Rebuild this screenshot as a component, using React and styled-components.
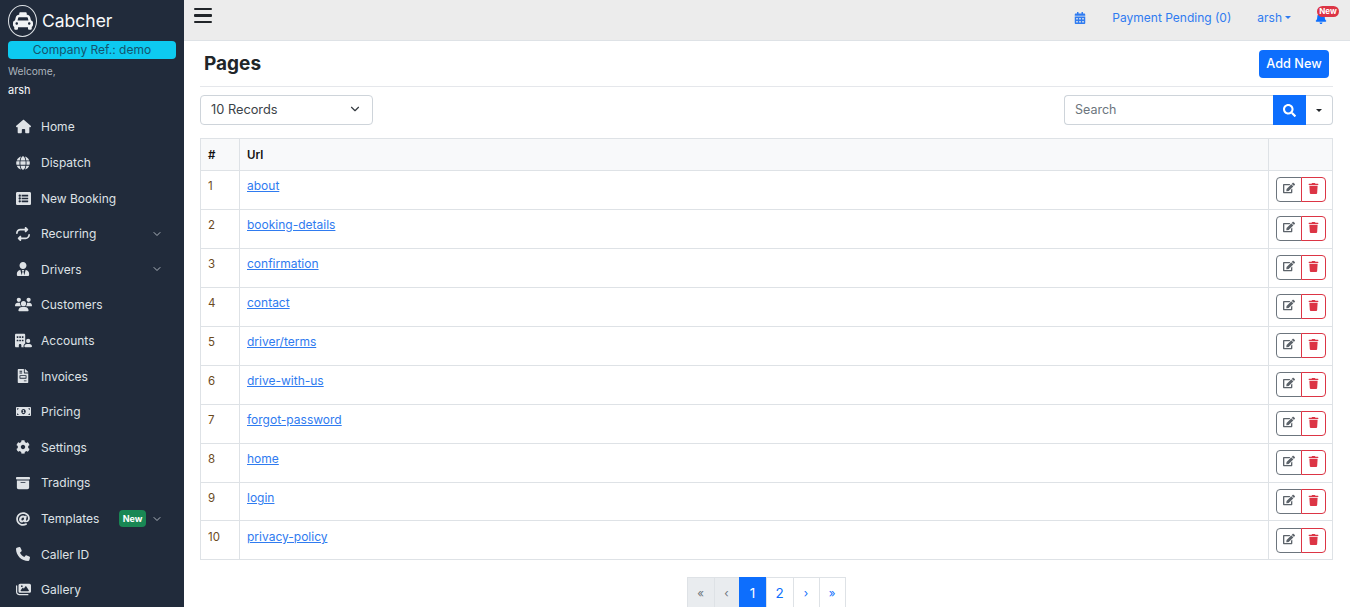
import React from 'react';
import styled, { createGlobalStyle } from 'styled-components';
import {
  FaGlobe, FaListAlt, FaUserTie, FaFileInvoice, FaMoneyBillAlt,
  FaCog, FaAt, FaCalendarAlt, FaBell, FaEdit, FaTrash, FaSearch, FaTaxi,
} from 'react-icons/fa';
import { FaBuildingUser, FaPhone, FaImages, FaBoxArchive, FaRepeat, FaHouse, FaUsers } from 'react-icons/fa6';
import { ChevronDown } from 'lucide-react';

const GlobalStyle = createGlobalStyle`
  * { box-sizing: border-box; }
  html, body { margin: 0; height: 100%; overflow: hidden; }
  body { font-family: Inter, "Liberation Sans", sans-serif; font-size: 12px; color: #212529; background: #fff; }
`;

const menu = [
  { label: 'Home', icon: FaHouse, size: 15 },
  { label: 'Dispatch', icon: FaGlobe, size: 14 },
  { label: 'New Booking', icon: FaListAlt, size: 15 },
  { label: 'Recurring', icon: FaRepeat, size: 14, caret: true },
  { label: 'Drivers', icon: FaUserTie, size: 14, caret: true },
  { label: 'Customers', icon: FaUsers, size: 17 },
  { label: 'Accounts', icon: FaBuildingUser, size: 17 },
  { label: 'Invoices', icon: FaFileInvoice, size: 14 },
  { label: 'Pricing', icon: FaMoneyBillAlt, size: 15 },
  { label: 'Settings', icon: FaCog, size: 14 },
  { label: 'Tradings', icon: FaBoxArchive, size: 14 },
  { label: 'Templates', icon: FaAt, size: 14, caret: true, badge: 'New' },
  { label: 'Caller ID', icon: FaPhone, size: 14 },
  { label: 'Gallery', icon: FaImages, size: 15 },
];

const pages = [
  'about', 'booking-details', 'confirmation', 'contact', 'driver/terms',
  'drive-with-us', 'forgot-password', 'home', 'login', 'privacy-policy',
];

const pager = [
  { label: '«', disabled: true, arrow: true, width: 28 },
  { label: '‹', disabled: true, arrow: true, width: 26 },
  { label: '1', active: true, width: 28 },
  { label: '2', width: 28 },
  { label: '›', arrow: true, width: 27 },
  { label: '»', arrow: true, width: 27 },
];

const App = () => {
  return (
    <Layout>
      <GlobalStyle />
      <Sidebar>
        <Brand>
          <BrandLogo><FaTaxi size={20} /></BrandLogo>
          <BrandName>Cabcher</BrandName>
        </Brand>
        <CompanyRef>Company Ref.: demo</CompanyRef>
        <Welcome>Welcome,</Welcome>
        <UserName>arsh</UserName>
        <Menu>
          {menu.map(item => (
            <MenuItem key={item.label}>
              <MenuIcon><item.icon size={item.size} /></MenuIcon>
              <MenuLabel>{item.label}</MenuLabel>
              {item.badge && <NewBadge>{item.badge}</NewBadge>}
              {item.caret && <MenuCaret><ChevronDown size={12} /></MenuCaret>}
            </MenuItem>
          ))}
        </Menu>
      </Sidebar>
      <Main>
        <Topbar>
          <Burger aria-label="Toggle menu">
            <span /><span /><span />
          </Burger>
          <TopLinks>
            <TopLink><FaCalendarAlt size={12} /></TopLink>
            <TopLink>Payment Pending (0)</TopLink>
            <TopLink>arsh<SmallCaret /></TopLink>
            <BellLink>
              <FaBell size={12} />
              <BellBadge>New</BellBadge>
            </BellLink>
          </TopLinks>
        </Topbar>
        <Content>
          <PageHeader>
            <Title>Pages</Title>
            <AddButton>Add New</AddButton>
          </PageHeader>
          <Filters>
            <RecordsSelect>
              10 Records
              <ChevronDown size={14} color="#343a40" />
            </RecordsSelect>
            <SearchGroup>
              <SearchInput placeholder="Search" />
              <SearchButton aria-label="Search"><FaSearch size={13} /></SearchButton>
              <SearchMenu aria-label="Options"><SmallCaret /></SearchMenu>
            </SearchGroup>
          </Filters>
          <Table>
            <thead>
              <tr>
                <HeadCell $width={39}>#</HeadCell>
                <HeadCell>Url</HeadCell>
                <HeadCell $width={64} />
              </tr>
            </thead>
            <tbody>
              {pages.map((page, i) => (
                <tr key={page}>
                  <NumCell>{i + 1}</NumCell>
                  <UrlCell><PageLink href="#">{page}</PageLink></UrlCell>
                  <ActionCell>
                    <Actions>
                      <EditButton aria-label="Edit"><FaEdit size={12} /></EditButton>
                      <DeleteButton aria-label="Delete"><FaTrash size={11} /></DeleteButton>
                    </Actions>
                  </ActionCell>
                </tr>
              ))}
            </tbody>
          </Table>
          <Pagination>
            {pager.map(p => (
              <PageItem
                key={p.label}
                $active={p.active}
                $disabled={p.disabled}
                $arrow={p.arrow}
                $width={p.width}
              >
                {p.label}
              </PageItem>
            ))}
          </Pagination>
        </Content>
      </Main>
    </Layout>
  );
};

const Layout = styled.div`
  display: flex;
  height: 100vh;
  overflow: hidden;
`;

const Sidebar = styled.aside`
  flex: 0 0 184px;
  background: #212b3b;
  color: #e9ecef;
  padding: 5px 8px 0;
  overflow: hidden;
`;

const Brand = styled.div`
  display: flex;
  align-items: center;
  gap: 5px;
  height: 32px;
`;

const BrandLogo = styled.div`
  width: 29px;
  height: 32px;
  border: 1px solid #dee2e6;
  border-radius: 50%;
  display: flex;
  align-items: center;
  justify-content: center;
  color: #f1f3f5;
`;

const BrandName = styled.div`
  padding-bottom: 2px;
  font-size: 17.5px;
  color: #f8f9fa;
`;

const CompanyRef = styled.div`
  margin-top: 4px;
  height: 18px;
  line-height: 18px;
  background: #0dcaf0;
  border-radius: 4px;
  text-align: center;
  font-size: 12px;
  color: #14546e;
`;

const Welcome = styled.div`
  margin-top: 4px;
  font-size: 10.2px;
  line-height: 16px;
  color: #adb5bd;
`;

const UserName = styled.div`
  margin-top: 3px;
  font-size: 11px;
  line-height: 16px;
  color: #f8f9fa;
`;

const Menu = styled.nav`
  margin-top: 11.2px;
`;

const MenuItem = styled.div`
  display: flex;
  align-items: center;
  height: 35.6px;
  padding-left: 2px;
`;

const MenuIcon = styled.span`
  flex: 0 0 26px;
  display: flex;
  justify-content: center;
  margin-right: 5px;
  color: #dee2e6;
`;

const MenuLabel = styled.span`
  flex: 1;
  font-size: 12px;
  color: #dee2e6;
`;

const NewBadge = styled.span`
  height: 17px;
  line-height: 17px;
  padding: 0 3.5px;
  margin-right: 5px;
  border-radius: 4px;
  background: #198754;
  color: #fff;
  font-size: 9px;
  font-weight: 700;
`;

const MenuCaret = styled.span`
  display: flex;
  margin-right: 13px;
  color: #adb5bd;
`;

const Main = styled.main`
  flex: 1;
  min-width: 0;
`;

const Topbar = styled.header`
  display: flex;
  align-items: center;
  justify-content: space-between;
  height: 41px;
  padding: 0 23px 10px 10px;
  background: #ececec;
  border-bottom: 1px solid #dee2e6;
`;

const Burger = styled.button`
  display: flex;
  flex-direction: column;
  gap: 4px;
  width: 18px;
  margin-top: 1px;
  padding: 0;
  border: 0;
  background: none;
  span {
    height: 2.5px;
    border-radius: 1px;
    background: #212529;
  }
`;

const TopLinks = styled.div`
  display: flex;
  align-items: center;
  margin-top: 5px;
`;

const TopLink = styled.a`
  display: flex;
  align-items: center;
  margin-left: 26px;
  font-size: 12px;
  color: #2f7bf0;
`;

const SmallCaret = styled.span`
  display: inline-block;
  margin-left: 3px;
  border-top: 3.5px solid currentColor;
  border-left: 3.5px solid transparent;
  border-right: 3.5px solid transparent;
`;

const BellLink = styled.a`
  position: relative;
  display: flex;
  margin-left: 24px;
  color: #0d6efd;
`;

const BellBadge = styled.span`
  position: absolute;
  top: -6px;
  left: 2px;
  width: 22px;
  height: 11px;
  line-height: 11px;
  text-align: center;
  border-radius: 5.5px;
  background: #dc3545;
  color: #fff;
  font-size: 8px;
  font-weight: 700;
`;

const Content = styled.div`
  padding: 0 17px 0 16px;
`;

const PageHeader = styled.div`
  display: flex;
  align-items: center;
  justify-content: space-between;
  height: 46px;
  padding: 0 4px;
  border-bottom: 1px solid #e5e7eb;
`;

const Title = styled.h1`
  margin: 0;
  font-size: 19px;
  font-weight: 700;
  color: #212529;
`;

const AddButton = styled.button`
  width: 70px;
  height: 28px;
  padding: 0;
  border: 0;
  border-radius: 4px;
  background: #0d6efd;
  color: #fff;
  font: 500 12.7px Inter, sans-serif;
`;

const Filters = styled.div`
  display: flex;
  align-items: center;
  justify-content: space-between;
  margin-top: 8px;
`;

const RecordsSelect = styled.div`
  display: flex;
  align-items: center;
  justify-content: space-between;
  width: 173px;
  height: 30px;
  padding: 0 10px 2px;
  border: 1px solid #ced4da;
  border-radius: 4px;
  font-size: 12.8px;
  color: #3b4248;
`;

const SearchGroup = styled.div`
  display: flex;
  height: 30px;
`;

const SearchInput = styled.input`
  width: 209px;
  padding: 0 10px 2px;
  border: 1px solid #ced4da;
  border-right: 0;
  border-radius: 4px 0 0 4px;
  font: 12.5px Inter, sans-serif;
  outline: none;
  &::placeholder { color: #6c757d; opacity: 1; }
`;

const SearchButton = styled.button`
  display: flex;
  align-items: center;
  justify-content: center;
  width: 33px;
  padding: 0;
  border: 0;
  background: #0d6efd;
  color: #fff;
`;

const SearchMenu = styled.button`
  display: flex;
  align-items: center;
  justify-content: center;
  width: 27px;
  padding: 0 3px 0 0;
  border: 1px solid #ced4da;
  border-left: 0;
  border-radius: 0 4px 4px 0;
  background: #fff;
  color: #212529;
`;

const HeadCell = styled.th`
  width: ${p => (p.$width ? `${p.$width}px` : 'auto')};
  height: 32px;
  padding: 0 7px;
  border: 1px solid #dee2e6;
  background: #f8f9fa;
  text-align: left;
  font-weight: 600;
  font-size: 11.5px;
  color: #111;
`;

const Cell = styled.td`
  height: 39px;
  padding: 8px 7px 0;
  vertical-align: top;
  border: 1px solid #dee2e6;
`;

const NumCell = styled(Cell)`
  font-size: 11.5px;
  color: #6b4a1e;
  tr:last-child & { padding-top: 9px; }
`;

const UrlCell = styled(Cell)`
  padding-top: 7px;
  tr:last-child & { padding-top: 8px; }
`;

const ActionCell = styled(Cell)`
  padding: 0 6px 0 7px;
  vertical-align: middle;
  tr:last-child & { padding-top: 2px; }
`;

const Table = styled.table`
  width: 100%;
  margin-top: 13px;
  border-collapse: collapse;
  font-size: 12px;

  tbody tr:nth-child(9) td {
    height: 38px;
  }
`;

const PageLink = styled.a`
  color: #2f7bf0;
  text-decoration: underline;
`;

const Actions = styled.div`
  display: flex;
  height: 25px;
  margin-bottom: 1px;
`;

const EditButton = styled.button`
  width: 26px;
  padding: 0;
  border: 1px solid #6c757d;
  border-radius: 4px 0 0 4px;
  background: #fff;
  color: #5c636a;
`;

const DeleteButton = styled.button`
  width: 25px;
  margin-left: -1px;
  padding: 0;
  border: 1px solid #dc3545;
  border-radius: 0 4px 4px 0;
  background: #fff;
  color: #dc3545;
`;

const Pagination = styled.div`
  display: flex;
  justify-content: center;
  margin-top: 17px;
`;

const PageItem = styled.a`
  width: ${p => p.$width}px;
  height: 32px;
  line-height: 30px;
  margin-left: -1px;
  text-align: center;
  font-size: ${p => (p.$arrow ? 11.5 : 13.5)}px;
  border: 1px solid #dee2e6;
  background: ${p => (p.$active ? '#0d6efd' : p.$disabled ? '#e9ecef' : '#fff')};
  color: ${p => (p.$active ? '#fff' : p.$disabled ? '#6c757d' : '#0d6efd')};
  border-color: ${p => (p.$active ? '#0d6efd' : '#dee2e6')};
`;

export default App;
